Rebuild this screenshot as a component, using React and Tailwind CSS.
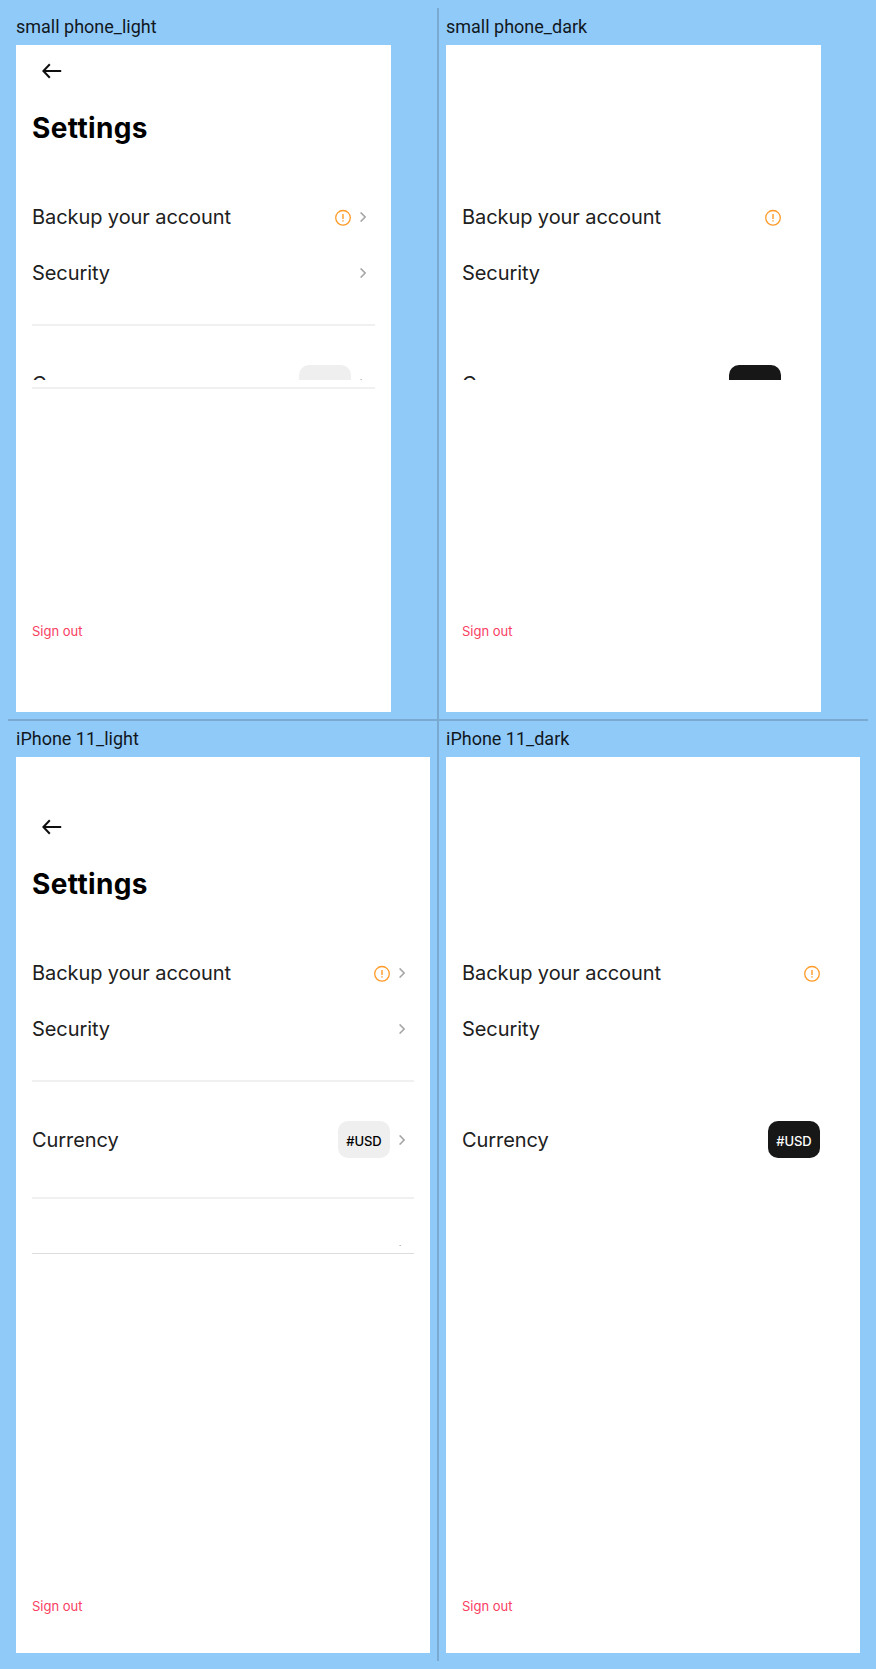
import React from "react";

function BackArrow() {
  return (
    <svg width="20" height="16" viewBox="0 0 20 16" fill="none" stroke="#0f0f0f" strokeWidth="2">
      <path d="M19.2 8H1.4M7.8 1.3L1.4 8l6.4 6.7" />
    </svg>
  );
}

function Chevron() {
  return (
    <svg className="shrink-0" width="6" height="10" viewBox="0 0 6 10" fill="none" stroke="#a4a4a4" strokeWidth="1.5">
      <path d="M0.6 0.4L5.1 5L0.6 9.6" />
    </svg>
  );
}

function Warning() {
  return (
    <svg width="16" height="17" viewBox="0 0 16 17" fill="none" stroke="#ff9a26">
      <circle cx="8" cy="8.8" r="7.3" strokeWidth="1.3" />
      <path d="M8 4.9V10.1M8 11.2V12.6" strokeWidth="1.4" />
    </svg>
  );
}

function Row({ label, dark, children }) {
  return (
    <div className="flex h-14 shrink-0 items-center pr-[9px]">
      <span className="flex-1 text-[20px] leading-7 tracking-[-0.08px] text-[#202020]">{label}</span>
      {children}
      <span className={`ml-[9px] flex ${dark ? "invisible" : ""}`}>
        <Chevron />
      </span>
    </div>
  );
}

function Divider({ dark, className }) {
  return <div className={`h-0.5 shrink-0 ${dark ? "bg-white" : "bg-[#f0f0f0]"} ${className}`} />;
}

function Phone({ large, dark }) {
  return (
    <div className={`flex flex-col bg-white px-4 ${large ? "h-[896px] w-[414px] pt-11" : "h-[667px] w-[375px]"}`}>
      <div className={`flex h-[52px] shrink-0 items-center pl-2.5 ${dark ? "invisible" : ""}`}>
        <BackArrow />
      </div>
      <h1
        className={`mt-3.5 mb-11 h-[34px] text-[28px] leading-[34px] font-bold tracking-[0.37px] ${
          dark ? "text-white" : "text-black"
        }`}
      >
        Settings
      </h1>
      <div className={`flex shrink-0 flex-col overflow-hidden ${large ? "h-[301px]" : "h-[191px]"}`}>
        <Row label="Backup your account" dark={dark}>
          <Warning />
        </Row>
        <Row label="Security" dark={dark} />
        <Divider dark={dark} className="mt-[23px] mb-[30px]" />
        <Row label="Currency" dark={dark}>
          <span
            className={`mb-px flex h-[37px] w-[52px] items-center justify-center rounded-[10px] pt-0.5 text-[13px] leading-5 font-medium tracking-[-0.1px] ${
              dark ? "bg-[#171717] text-white" : "bg-[#efefef] text-black"
            }`}
          >
            #USD
          </span>
        </Row>
        <Divider dark={dark} className="mt-[29px] mb-[23px]" />
        <Row dark={dark} />
      </div>
      <div
        className={`mt-[7px] shrink-0 ${large ? "h-px" : "h-0.5"} ${
          dark ? "bg-white" : large ? "bg-[#dddddd]" : "bg-[#f0f0f0]"
        }`}
      />
      <div className={`mt-auto text-[13px] leading-5 text-[#f9405f] ${large ? "mb-[37px]" : "mb-[71px]"}`}>Sign out</div>
    </div>
  );
}

function Cell({ title, className, ...phone }) {
  return (
    <div className={`border-[#7aa9d1] ${className}`}>
      <div className="mb-2 h-[21px] font-[Roboto,sans-serif] text-[18px] leading-[21px] text-[#10181e]">{title}</div>
      <Phone {...phone} />
    </div>
  );
}

export default function App() {
  return (
    <div className="h-[1669px] w-[876px] bg-[#90caf9] p-2 font-[Inter,sans-serif]">
      <div className="grid grid-cols-[430px_430px] grid-rows-[712px_941px]">
        <Cell title="small phone_light" className="border-r border-b pt-2 pl-2" />
        <Cell title="small phone_dark" dark className="border-b border-l pt-2 pl-[7px]" />
        <Cell title="iPhone 11_light" large className="border-t border-r pt-[7px] pl-2" />
        <Cell title="iPhone 11_dark" large dark className="border-t border-l pt-[7px] pl-[7px]" />
      </div>
    </div>
  );
}
